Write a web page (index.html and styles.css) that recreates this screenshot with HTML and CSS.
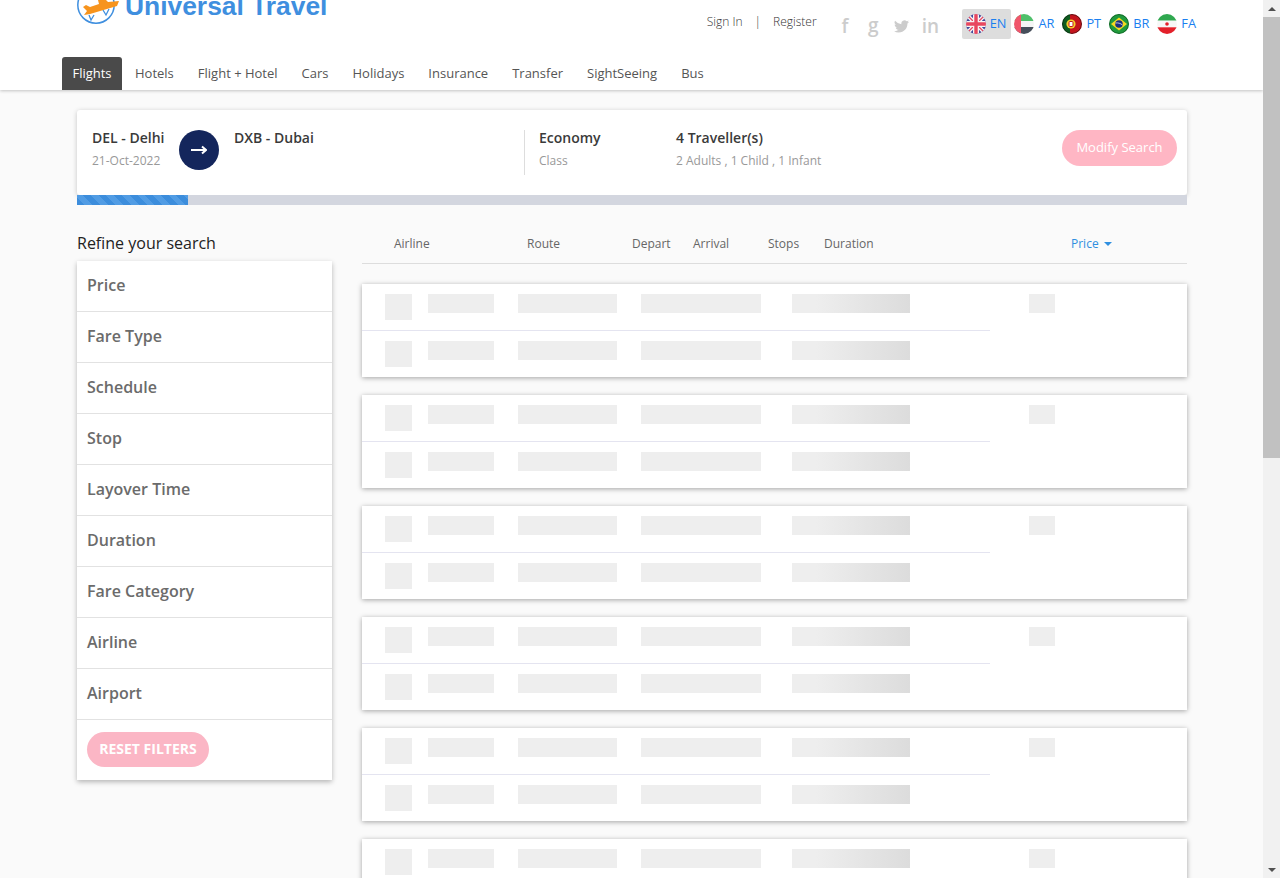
FILE: index.html
```html
<!DOCTYPE html>
<html lang="en">
<head>
  <meta charset="UTF-8" />
  <title>Universal Travel - Flights</title>
  <link rel="stylesheet" href="styles.css">
</head>
<body>
  <div class="page">
    <header class="header">
      <div class="top">
        <a class="logo">
          <svg class="logo-icon" width="44" height="26" viewBox="0 0 44 26">
            <circle cx="19" cy="5" r="18.2" fill="none" stroke="#3f8fdf" stroke-width="1.5"/>
            <path d="M12 15l2 5 3-5M26 10l3 5 3-6" fill="none" stroke="#3f8fdf" stroke-width="1.3"/>
            <path d="M7 15l6-1 27-8 2-5-11 1-2-2h-8l1 4-9 3-4-2-3 2 4 4z" fill="#f7941d"/>
          </svg>
          <span class="logo-text">Universal Travel</span>
        </a>
        <div class="account">
          <a>Sign In</a>
          <span class="sep">|</span>
          <a>Register</a>
        </div>
        <div class="social">
          <span class="soc">f</span>
          <span class="soc soc-g">g</span>
          <span class="soc">
            <svg width="15" height="13" viewBox="0 0 24 20">
              <path d="M24 2.400c-.9.4-1.800.7-2.800.8 1-.6 1.800-1.600 2.200-2.700-1 .6-2 1-3.100 1.200A4.900 4.900 0 0 0 11.900 6.200 14 14 0 0 1 1.700.900a4.900 4.900 0 0 0 1.500 6.600c-.8 0-1.600-.2-2.200-.6 0 2.400 1.700 4.400 3.900 4.900-.7.2-1.500.2-2.200.1.600 2 2.400 3.400 4.600 3.400A9.900 9.900 0 0 1 0 17.400 14 14 0 0 0 7.500 19.600c9.100 0 14.300-7.700 14-14.600 1-.7 1.800-1.600 2.500-2.600z" fill="#ccc"/>
            </svg>
          </span>
          <span class="soc">in</span>
        </div>
        <div class="langs">
          <a class="lang active">
            <svg class="flag" viewBox="0 0 20 20">
              <clipPath id="c1"><circle cx="10" cy="10" r="10"/></clipPath>
              <g clip-path="url(#c1)">
                <rect width="20" height="20" fill="#41479b"/>
                <path d="M0 0l20 20M20 0L0 20" stroke="#f5f5f5" stroke-width="4"/>
                <path d="M0 0l20 20M20 0L0 20" stroke="#e8475f" stroke-width="1.300"/>
                <path d="M10 0v20M0 10h20" stroke="#f5f5f5" stroke-width="6"/>
                <path d="M10 0v20M0 10h20" stroke="#e8475f" stroke-width="3.400"/>
              </g>
            </svg>
            EN
          </a>
          <a class="lang">
            <svg class="flag" viewBox="0 0 20 20">
              <clipPath id="c2"><circle cx="10" cy="10" r="10"/></clipPath>
              <g clip-path="url(#c2)">
                <rect width="20" height="7" fill="#4fc06a"/>
                <rect y="7" width="20" height="6" fill="#f5f5f5"/>
                <rect y="13" width="20" height="7" fill="#464e5a"/>
                <rect width="7" height="20" fill="#f0566b"/>
              </g>
            </svg>
            AR
          </a>
          <a class="lang">
            <svg class="flag" viewBox="0 0 20 20">
              <clipPath id="c3"><circle cx="10" cy="10" r="10"/></clipPath>
              <g clip-path="url(#c3)">
                <rect width="8" height="20" fill="#0d5c1e"/>
                <rect x="8" width="12" height="20" fill="#c4141c"/>
                <circle cx="9" cy="10" r="4.600" fill="#f3d22c"/>
                <rect x="7" y="7.500" width="4" height="5" rx="1" fill="#fff" stroke="#c4141c"/>
                <circle cx="10" cy="10" r="9.500" fill="none" stroke="#111" stroke-opacity=".6"/>
              </g>
            </svg>
            PT
          </a>
          <a class="lang">
            <svg class="flag" viewBox="0 0 20 20">
              <clipPath id="c4"><circle cx="10" cy="10" r="10"/></clipPath>
              <g clip-path="url(#c4)">
                <rect width="20" height="20" fill="#1f9a3c"/>
                <path d="M10 3.500L18 10l-8 6.500L2 10z" fill="#f6d921"/>
                <circle cx="10" cy="10" r="3.800" fill="#1b2f80"/>
                <path d="M6.500 9c2.500-.4 5 .3 7 2" stroke="#fff" fill="none" stroke-width=".7"/>
                <circle cx="10" cy="10" r="9.500" fill="none" stroke="#0b3d1a" stroke-opacity=".6"/>
              </g>
            </svg>
            BR
          </a>
          <a class="lang">
            <svg class="flag" viewBox="0 0 20 20">
              <clipPath id="c5"><circle cx="10" cy="10" r="10"/></clipPath>
              <g clip-path="url(#c5)">
                <rect width="20" height="6.700" fill="#2fa84f"/>
                <rect y="6.700" width="20" height="6.600" fill="#f7f7f7"/>
                <rect y="13.300" width="20" height="6.700" fill="#e3202a"/>
                <circle cx="10" cy="10" r="1.800" fill="#e3202a"/>
              </g>
            </svg>
            FA
          </a>
        </div>
      </div>
      <nav class="nav">
        <a class="tab active">Flights</a>
        <a class="tab">Hotels</a>
        <a class="tab">Flight + Hotel</a>
        <a class="tab">Cars</a>
        <a class="tab">Holidays</a>
        <a class="tab">Insurance</a>
        <a class="tab">Transfer</a>
        <a class="tab">SightSeeing</a>
        <a class="tab">Bus</a>
      </nav>
    </header>

    <main class="main">
      <section class="summary">
        <div class="place place-from">
          <div class="strong">DEL - Delhi</div>
          <div class="muted">21-Oct-2022</div>
        </div>
        <div class="arrow">
          <svg width="16" height="10" viewBox="0 0 16 10">
            <path d="M0 5h15M11 1.500L15 5l-4 3.500" fill="none" stroke="#fff" stroke-width="2"/>
          </svg>
        </div>
        <div class="place place-to">
          <div class="strong">DXB - Dubai</div>
        </div>
        <div class="place place-class">
          <div class="strong">Economy</div>
          <div class="muted">Class</div>
        </div>
        <div class="place">
          <div class="strong">4 Traveller(s)</div>
          <div class="muted">2 Adults , 1 Child , 1 Infant</div>
        </div>
        <button class="modify">Modify Search</button>
      </section>
      <div class="progress"><div class="progress-bar"></div></div>

      <div class="content">
        <aside class="filters">
          <h3 class="filters-title">Refine your search</h3>
          <div class="filter-card">
            <div class="filter">Price</div>
            <div class="filter">Fare Type</div>
            <div class="filter">Schedule</div>
            <div class="filter">Stop</div>
            <div class="filter">Layover Time</div>
            <div class="filter">Duration</div>
            <div class="filter">Fare Category</div>
            <div class="filter">Airline</div>
            <div class="filter">Airport</div>
            <div class="filter-foot"><button class="reset">RESET FILTERS</button></div>
          </div>
        </aside>

        <section class="results">
          <div class="sort">
            <span class="col-airline">Airline</span>
            <span class="col-route">Route</span>
            <span class="col-depart">Depart</span>
            <span class="col-arrival">Arrival</span>
            <span class="col-stops">Stops</span>
            <span class="col-duration">Duration</span>
            <span class="col-price">Price <i class="caret"></i></span>
          </div>

          <div class="card">
            <div class="legs">
              <div class="leg"><b class="sk sk-logo"></b><b class="sk sk-a"></b><b class="sk sk-b"></b><b class="sk sk-c"></b><b class="sk sk-d"></b></div>
              <div class="leg"><b class="sk sk-logo"></b><b class="sk sk-a"></b><b class="sk sk-b"></b><b class="sk sk-c"></b><b class="sk sk-d"></b></div>
            </div>
            <b class="sk sk-price"></b>
          </div>
          <div class="card">
            <div class="legs">
              <div class="leg"><b class="sk sk-logo"></b><b class="sk sk-a"></b><b class="sk sk-b"></b><b class="sk sk-c"></b><b class="sk sk-d"></b></div>
              <div class="leg"><b class="sk sk-logo"></b><b class="sk sk-a"></b><b class="sk sk-b"></b><b class="sk sk-c"></b><b class="sk sk-d"></b></div>
            </div>
            <b class="sk sk-price"></b>
          </div>
          <div class="card">
            <div class="legs">
              <div class="leg"><b class="sk sk-logo"></b><b class="sk sk-a"></b><b class="sk sk-b"></b><b class="sk sk-c"></b><b class="sk sk-d"></b></div>
              <div class="leg"><b class="sk sk-logo"></b><b class="sk sk-a"></b><b class="sk sk-b"></b><b class="sk sk-c"></b><b class="sk sk-d"></b></div>
            </div>
            <b class="sk sk-price"></b>
          </div>
          <div class="card">
            <div class="legs">
              <div class="leg"><b class="sk sk-logo"></b><b class="sk sk-a"></b><b class="sk sk-b"></b><b class="sk sk-c"></b><b class="sk sk-d"></b></div>
              <div class="leg"><b class="sk sk-logo"></b><b class="sk sk-a"></b><b class="sk sk-b"></b><b class="sk sk-c"></b><b class="sk sk-d"></b></div>
            </div>
            <b class="sk sk-price"></b>
          </div>
          <div class="card">
            <div class="legs">
              <div class="leg"><b class="sk sk-logo"></b><b class="sk sk-a"></b><b class="sk sk-b"></b><b class="sk sk-c"></b><b class="sk sk-d"></b></div>
              <div class="leg"><b class="sk sk-logo"></b><b class="sk sk-a"></b><b class="sk sk-b"></b><b class="sk sk-c"></b><b class="sk sk-d"></b></div>
            </div>
            <b class="sk sk-price"></b>
          </div>
          <div class="card">
            <div class="legs">
              <div class="leg"><b class="sk sk-logo"></b><b class="sk sk-a"></b><b class="sk sk-b"></b><b class="sk sk-c"></b><b class="sk sk-d"></b></div>
              <div class="leg"><b class="sk sk-logo"></b><b class="sk sk-a"></b><b class="sk sk-b"></b><b class="sk sk-c"></b><b class="sk sk-d"></b></div>
            </div>
            <b class="sk sk-price"></b>
          </div>
        </section>
      </div>
    </main>
  </div>

  <div class="scrollbar">
    <div class="scroll-btn"><i class="tri tri-up"></i></div>
    <div class="scroll-track"><div class="scroll-thumb"></div></div>
    <div class="scroll-btn"><i class="tri tri-down"></i></div>
  </div>
</body>
</html>
```
FILE: styles.css
```css
html, body {
  height: 100%;
  overflow: hidden;
}
body {
  display: flex;
  margin: 0;
  font-family: "Open Sans", sans-serif;
  background: #fafafa;
  color: #333;
}
.page {
  flex: 1;
  min-width: 0;
  height: 878px;
  overflow: hidden;
}

/* header */
.header {
  position: relative;
  height: 90px;
  background: #fff;
  box-shadow: 0 1px 3px rgba(0, 0, 0, .22);
}
.top {
  display: flex;
  align-items: flex-start;
  height: 57px;
  padding: 0 62px 0 77px;
  overflow: hidden;
}
.logo {
  display: flex;
  align-items: flex-start;
}
.logo-icon {
  display: block;
  width: 44px;
  margin-right: 4px;
}
.logo-text {
  margin-top: -7px;
  font-family: "Liberation Sans", sans-serif;
  font-size: 26.4px;
  font-weight: 700;
  line-height: 26px;
  color: #3f8fdf;
}
.account {
  display: flex;
  margin: 13px 0 0 auto;
  font-size: 12px;
  font-weight: 300;
  line-height: 18px;
  color: #333;
}
.sep {
  margin: 0 12px;
}
.social {
  display: flex;
  align-items: center;
  box-sizing: border-box;
  width: 145px;
  height: 16px;
  margin-top: 18px;
  padding-left: 14px;
}
.soc {
  display: flex;
  justify-content: center;
  width: 28.5px;
  font-size: 19px;
  font-weight: 600;
  line-height: 16px;
  color: #ccc;
}
.soc-g {
  margin-top: -3px;
}
.langs {
  display: flex;
  margin-top: 9px;
}
.lang {
  display: flex;
  align-items: center;
  box-sizing: border-box;
  height: 30px;
  padding: 0 5px 3px 3px;
  font-size: 12.8px;
  color: #1a7ff0;
}
.lang.active {
  padding-left: 4px;
  background: #ddd;
  border-radius: 2px;
}
.flag {
  width: 20px;
  height: 20px;
  margin: 3px 4px 0 0;
}
.nav {
  display: flex;
  height: 33px;
  padding-left: 62px;
}
.tab {
  padding: 0 12px;
  font-size: 13px;
  line-height: 33px;
  color: #555;
}
.tab.active {
  box-sizing: border-box;
  width: 60px;
  margin-right: 1px;
  padding: 0;
  background: #4a4a4a;
  border-radius: 3px 3px 0 0;
  color: #fff;
  text-align: center;
}

/* search summary */
.main {
  width: 1110px;
  margin: 20px 0 0 77px;
}
.summary {
  display: flex;
  align-items: flex-start;
  box-sizing: border-box;
  height: 85px;
  padding: 20px 10px 0 15px;
  background: #fff;
  border-radius: 3px;
  box-shadow: 0 1px 5px rgba(0, 0, 0, .22);
}
.strong {
  font-size: 14px;
  font-weight: 600;
  line-height: 16px;
  color: #3a3a3a;
}
.muted {
  margin-top: 7px;
  font-size: 12px;
  line-height: 15px;
  color: #999;
}
.place-from {
  width: 87px;
}
.arrow {
  display: flex;
  align-items: center;
  justify-content: center;
  width: 40px;
  height: 40px;
  background: #14265c;
  border-radius: 50%;
}
.place-to {
  width: 290px;
  margin-left: 15px;
}
.place-class {
  box-sizing: border-box;
  width: 152px;
  height: 45px;
  padding-left: 14px;
  border-left: 1px solid #ddd;
}
.modify {
  width: 115px;
  height: 36px;
  margin-left: auto;
  padding: 0 0 2px;
  border: 0;
  border-radius: 18px;
  background: #ffb6c4;
  font-family: inherit;
  font-size: 13px;
  color: #fff;
}
.progress {
  height: 10px;
  background: #d3d6df;
}
.progress-bar {
  width: 111px;
  height: 10px;
  background: repeating-linear-gradient(45deg, #3c8ddc 0 5.5px, #519ce4 5.5px 11px);
}

/* columns */
.content {
  display: flex;
  align-items: flex-start;
  margin-top: 27px;
}
.filters {
  width: 255px;
  margin-right: 30px;
}
.filters-title {
  margin: 0 0 7px;
  font-size: 16px;
  font-weight: 400;
  line-height: 22px;
  color: #222;
}
.filter-card {
  background: #fff;
  box-shadow: 0 2px 5px rgba(0, 0, 0, .28);
}
.filter {
  box-sizing: border-box;
  height: 51px;
  padding-left: 10px;
  border-bottom: 1px solid #e2e2e2;
  font-size: 16px;
  font-weight: 600;
  line-height: 49px;
  color: #6b6b6b;
}
.filter-foot {
  height: 60px;
  padding: 12px 0 0 10px;
  box-sizing: border-box;
}
.reset {
  width: 122px;
  height: 35px;
  padding: 0 0 2px;
  border: 0;
  border-radius: 18px;
  background: #fbb6c5;
  font-family: inherit;
  font-size: 14px;
  font-weight: 700;
  color: #fff;
}

/* results */
.results {
  flex: 1;
}
.sort {
  display: flex;
  box-sizing: border-box;
  height: 32px;
  margin-bottom: 20px;
  padding-left: 32px;
  border-bottom: 1px solid #ddd;
  font-size: 12px;
  line-height: 23px;
  color: #666;
}
.col-airline { width: 133px; }
.col-route { width: 105px; }
.col-depart { width: 61px; }
.col-arrival { width: 75px; }
.col-stops { width: 56px; }
.col-duration { width: 247px; }
.col-price { color: #2f8fe0; }
.caret {
  display: inline-block;
  margin-left: 2px;
  vertical-align: 2px;
  border: 4px solid transparent;
  border-top-color: #2f8fe0;
  border-bottom: 0;
}
.card {
  display: flex;
  align-items: flex-start;
  height: 93px;
  margin-bottom: 18px;
  background: #fff;
  box-shadow: 0 1px 5px rgba(0, 0, 0, .35);
}
.legs {
  width: 628px;
}
.leg {
  display: flex;
  align-items: flex-start;
  box-sizing: border-box;
  height: 47px;
  padding: 10px 0 0 23px;
}
.leg:first-child {
  border-bottom: 1px solid #e4e4f0;
}
.leg:last-child {
  height: 46px;
}
.sk {
  display: block;
  height: 19px;
  background: #eee;
}
.sk-logo { width: 27px; height: 26px; margin-right: 16px; }
.sk-a { width: 66px; margin-right: 24px; }
.sk-b { width: 99px; margin-right: 24px; }
.sk-c { width: 120px; margin-right: 31px; }
.sk-d { width: 118px; background: linear-gradient(90deg, #eee 20%, #dcdcdc 100%); }
.sk-price { width: 26px; margin: 10px 0 0 39px; }

/* scrollbar, the window's own one is not photographed */
.scrollbar {
  display: flex;
  flex-direction: column;
  flex: none;
  width: 17px;
  height: 878px;
  background: #f1f1f1;
}
.scroll-btn {
  display: flex;
  align-items: center;
  justify-content: center;
  height: 17px;
}
.scroll-track {
  flex: 1;
}
.scroll-thumb {
  height: 441px;
  background: #c1c1c1;
}
.tri {
  border: 4px solid transparent;
}
.tri-up {
  border-top: 0;
  border-bottom-color: #505050;
}
.tri-down {
  border-bottom: 0;
  border-top-color: #505050;
}
```
